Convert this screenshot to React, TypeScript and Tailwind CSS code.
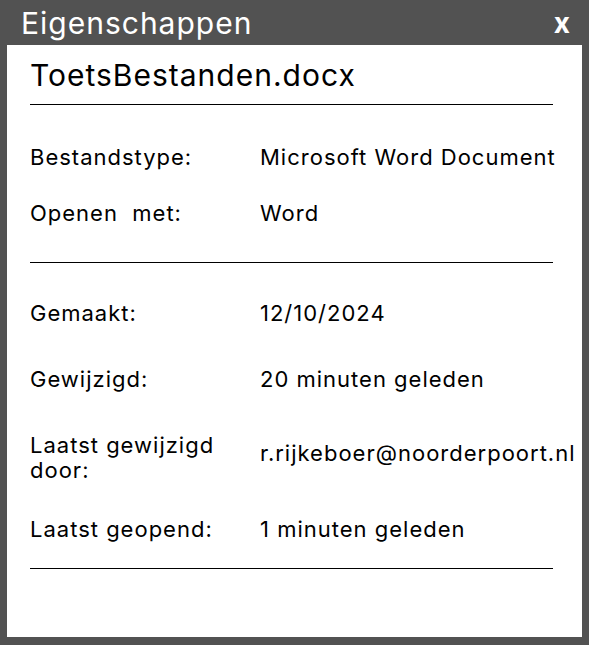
const rows1 = [
  { label: 'Bestandstype:', value: 'Microsoft Word Document', mt: 'mt-[40px]' },
  { label: 'Openen  met:', value: 'Word', mt: 'mt-[31px]' },
]

export default function App() {
  return (
    <div
      className="h-[645px] w-[589px] bg-[#525252] flex flex-col"
      style={{ fontFamily: 'Inter, "Noto Sans", sans-serif' }}
    >
      <div className="h-[45px] flex items-center justify-between pl-[21px] pr-[19px] text-white">
        <span className="text-[30px] leading-none tracking-[1px]">Eigenschappen</span>
        <span className="text-[28px] font-bold leading-none">x</span>
      </div>
      <div className="mx-[7px] h-[592px] bg-white pl-[23px] text-black">
        <div className="pt-[13px] text-[30px] leading-[34px] tracking-[1px]">ToetsBestanden.docx</div>
        <div className="mt-[12px] w-[523px] border-t border-black" />

        {rows1.map((r) => (
          <div key={r.label} className={`${r.mt} flex items-center text-[22px] leading-[25px] tracking-[1px]`}>
            <div className="w-[230px] whitespace-pre">{r.label}</div>
            <div>{r.value}</div>
          </div>
        ))}
        <div className="mt-[36px] w-[523px] border-t border-black" />

        <div className="mt-[38px] flex items-center text-[22px] leading-[25px] tracking-[1px]">
          <div className="w-[230px]">Gemaakt:</div>
          <div>12/10/2024</div>
        </div>
        <div className="mt-[41px] flex items-center text-[22px] leading-[25px] tracking-[1px]">
          <div className="w-[230px]">Gewijzigd:</div>
          <div>20 minuten geleden</div>
        </div>
        <div className="mt-[41px] flex items-center text-[22px] leading-[25px] tracking-[1px]">
          <div className="w-[230px]">
            Laatst gewijzigd
            <br />
            door:
          </div>
          <div className="whitespace-nowrap -mt-[10px]">r.rijkeboer@noorderpoort.nl</div>
        </div>
        <div className="mt-[34px] flex items-center text-[22px] leading-[25px] tracking-[1px]">
          <div className="w-[230px]">Laatst geopend:</div>
          <div>1 minuten geleden</div>
        </div>
        <div className="mt-[26px] w-[523px] border-t border-black" />
      </div>
    </div>
  )
}
